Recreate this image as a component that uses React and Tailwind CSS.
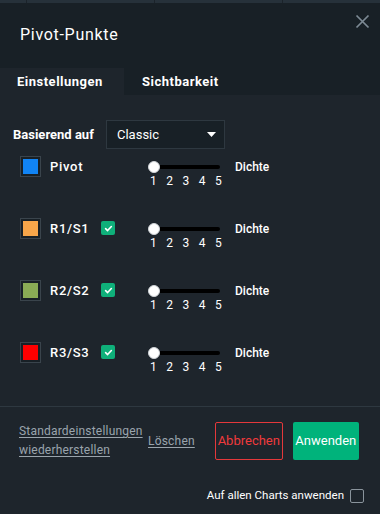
import React, { useState } from "react";

const rows = [
  { name: "Pivot", color: "bg-[#1184f5]", check: false },
  { name: "R1/S1", color: "bg-[#f7a64a]", check: true },
  { name: "R2/S2", color: "bg-[#8aac55]", check: true },
  { name: "R3/S3", color: "bg-[#ff0000]", check: true },
];

function CheckIcon() {
  return (
    <svg width="9" height="9" viewBox="0 0 10 10" fill="none">
      <path d="M1.8 5.2 L4 7.3 L8.2 2.8" stroke="white" strokeWidth="1.8" strokeLinecap="round" strokeLinejoin="round" />
    </svg>
  );
}

function Slider() {
  return (
    <div className="relative w-[76px] h-[34px] ml-[33px] mt-[12px]">
      {/* track */}
      <div className="absolute left-[8px] top-[9px] w-[64px] h-[4px] rounded-full bg-black" />
      {/* thumb */}
      <div className="absolute left-[0px] top-[5px] w-[12px] h-[12px] rounded-full bg-white border border-[#d0d4d8]" />
      <div className="absolute left-[2px] top-[18px] flex gap-[9.5px] text-[12px] leading-[14px] text-white">
        <span>1</span>
        <span>2</span>
        <span>3</span>
        <span>4</span>
        <span>5</span>
      </div>
    </div>
  );
}

function Row({ row }) {
  return (
    <div className="flex items-start h-[62px]">
      <div className="ml-[7px] w-[21px] h-[21px] border border-[#3a444c] bg-[#182026] flex items-center justify-center">
        <div className={`w-[15px] h-[15px] ${row.color}`} />
      </div>
      <div className="w-[51px] ml-[9px] mt-[2px] text-[13px] font-medium leading-[18px] text-white tracking-[0.7px]">
        {row.name}
      </div>
      <div className="w-[14px] h-[14px] mt-[3px]">
        {row.check && (
          <div className="w-[14px] h-[14px] rounded-[2px] bg-[#0fb07a] flex items-center justify-center">
            <CheckIcon />
          </div>
        )}
      </div>
      <div className="-mt-[12px]">
        <Slider />
      </div>
      <div className="ml-[11px] mt-[3px] text-[12px] font-medium leading-[16px] text-white">Dichte</div>
    </div>
  );
}

export default function App() {
  const [tab, setTab] = useState("settings");
  return (
    <div
      className="w-[380px] h-[514px] flex flex-col bg-[#1e252c] overflow-hidden"
      style={{ fontFamily: "Roboto, 'Liberation Sans', sans-serif" }}
    >
      {/* strip behind dialog */}
      <div className="h-[3px] bg-[#26313a] flex">
        <div className="w-[27px] border-r border-[#1b232a]" />
        <div className="w-[128px] border-r border-[#1b232a]" />
        <div className="w-[128px] border-r border-[#1b232a]" />
      </div>

      {/* header */}
      <div className="h-[65px] bg-[#182026] flex items-start justify-between">
        <h1 className="ml-[20px] mt-[22px] text-[16px] leading-[20px] text-white tracking-[0.7px]">Pivot-Punkte</h1>
        <button className="mt-[11px] mr-[10px] text-[#7d8a94]">
          <svg width="15" height="15" viewBox="0 0 15 15">
            <path d="M1.5 1.5 L13.5 13.5 M13.5 1.5 L1.5 13.5" stroke="currentColor" strokeWidth="1.7" />
          </svg>
        </button>
      </div>

      {/* tabs */}
      <div className="h-[27px] flex bg-[#182026]">
        <button
          onClick={() => setTab("settings")}
          className={`w-[124px] pl-[17px] text-left text-[13px] font-bold text-white tracking-[0.5px] ${tab === "settings" ? "bg-[#1e252c]" : ""}`}
        >
          Einstellungen
        </button>
        <button
          onClick={() => setTab("visibility")}
          className={`w-[110px] pl-[18px] text-left text-[13px] font-bold text-white tracking-[0.5px] ${tab === "visibility" ? "bg-[#1e252c]" : ""}`}
        >
          Sichtbarkeit
        </button>
      </div>

      {/* body */}
      <div className="h-[311px] px-[13px] pt-[25px]">
        <div className="flex items-center h-[29px]">
          <span className="text-[13px] font-bold text-white w-[93px]">Basierend auf</span>
          <div className="w-[119px] h-[29px] bg-[#182026] border border-[#2e3840] flex items-center justify-between pl-[10px] pr-[8px]">
            <span className="text-[13px] text-white">Classic</span>
            <svg width="9" height="5" viewBox="0 0 9 5">
              <path d="M0 0 L9 0 L4.5 5 Z" fill="white" />
            </svg>
          </div>
        </div>
        <div className="mt-[7px]">
          {rows.map((r) => (
            <Row key={r.name} row={r} />
          ))}
        </div>
      </div>

      {/* footer */}
      <div className="flex-1 border-t border-[#2e3840] px-[19px]">
        <div className="flex items-center mt-[15px] h-[38px]">
          <div className="text-[12px] leading-[19px] text-[#9aa4ac] underline underline-offset-2 w-[129px] tracking-[0.2px]">
            Standardeinstellungen
            <br />
            wiederherstellen
          </div>
          <span className="text-[12px] text-[#9aa4ac] underline underline-offset-2 tracking-[0.2px]">Löschen</span>
          <button className="ml-[20px] w-[68px] h-[38px] border border-[#e5383b] rounded-[2px] text-[13px] text-[#f03a3c]">
            Abbrechen
          </button>
          <button className="ml-[10px] w-[66px] h-[38px] bg-[#00b37b] rounded-[2px] text-[13px] text-white">
            Anwenden
          </button>
        </div>
        <div className="flex items-center justify-end mt-[27px] -mr-[3px]">
          <span className="text-[11.5px] text-white mr-[6px]">Auf allen Charts anwenden</span>
          <div className="w-[14px] h-[14px] border border-[#8a949c] rounded-[2px]" />
        </div>
      </div>
    </div>
  );
}
